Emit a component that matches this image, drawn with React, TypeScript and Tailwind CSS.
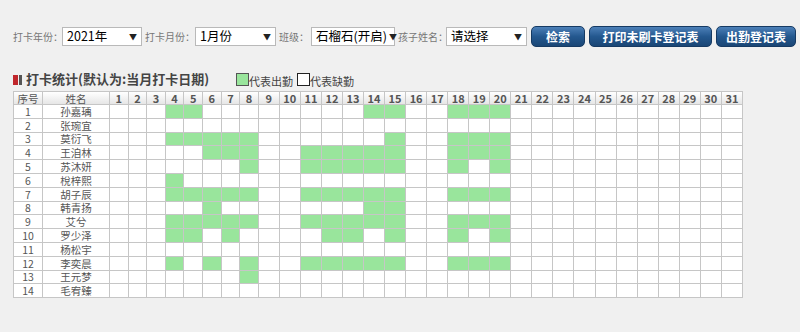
import React from "react";

const FONT = { fontFamily: '"Noto Sans CJK SC", "Liberation Sans", sans-serif' };

const names = [
  "孙嘉瑀", "张琬宜", "莫衍飞", "王洎林", "苏沐妍", "梲梓熙", "胡子辰",
  "韩青扬", "艾兮", "罗少泽", "杨松宇", "李奕晨", "王元梦", "毛宥臻",
];

const r = (a: number, b: number) => Array.from({ length: b - a + 1 }, (_, i) => a + i);

// days present per student
const present: number[][] = [
  [4, 5, 14, 15, 18, 19, 20],
  [],
  [...r(4, 8), 15, 18, 19, 20],
  [6, 7, 8, ...r(11, 15), 18, 19, 20],
  [8, ...r(11, 15), 18, 20],
  [4],
  [...r(4, 8), ...r(11, 15), 18, 19, 20],
  [6, 14, 15],
  [...r(4, 8), ...r(11, 15), 18, 19, 20],
  [4, 5, 7, 12, 13, 15, 18, 20],
  [],
  [4, 6, 8, ...r(11, 15), 18, 19, 20],
  [8],
  [],
];

const days = r(1, 31);

const Select = ({ value, width }: { value: string; width: string }) => (
  <div
    className={`${width} shrink-0 h-[19px] bg-white border border-[#b9b9b9] flex items-center justify-between pl-[4px] pr-[4px] text-[12.5px] text-black whitespace-nowrap`}
  >
    <span>{value}</span>
    <span className="text-[8px] text-[#222] ml-[2px]">▼</span>
  </div>
);

const Label = ({ text, width }: { text: string; width: string }) => (
  <span className={`${width} text-[10px] text-[#777] pl-[3px] whitespace-nowrap shrink-0`}>{text}</span>
);

const Btn = ({ text, width }: { text: string; width: string }) => (
  <button
    className={`${width} shrink-0 h-[21px] rounded-[5px] border border-[#163a63] bg-gradient-to-b from-[#4c80b8] via-[#24588f] to-[#1a4675] text-white text-[12px] font-bold flex items-center justify-center whitespace-nowrap`}
  >
    {text}
  </button>
);

export default function App() {
  return (
    <div className="w-[800px] h-[332px] bg-[#f0f0f0] overflow-hidden" style={FONT}>
      <div className="flex items-center pt-[26px] pl-[10px] h-[47px]">
        <Label text="打卡年份：" width="w-[52px]" />
        <Select value="2021年" width="w-[80px]" />
        <Label text="打卡月份：" width="w-[53px]" />
        <Select value="1月份" width="w-[81px]" />
        <Label text="班级：" width="w-[35px]" />
        <Select value="石榴石(开启)" width="w-[84px]" />
        <Label text="孩子姓名：" width="w-[51px]" />
        <Select value="请选择" width="w-[81px]" />
        <div className="flex gap-[4px] ml-[4px]">
          <Btn text="检索" width="w-[54px]" />
          <Btn text="打印未刷卡登记表" width="w-[123px]" />
          <Btn text="出勤登记表" width="w-[80px]" />
        </div>
      </div>

      <div className="flex items-end mt-[23px] pl-[13px] h-[18px]">
        <span className="flex items-center mr-[4px] mb-[3px]">
          <span className="w-[5px] h-[10px] bg-[#c0262c]" />
          <span className="w-[3px] h-[10px] bg-[#555] ml-[1px]" />
        </span>
        <span className="text-[13px] font-bold text-[#444] leading-[18px] whitespace-nowrap">打卡统计(默认为:当月打卡日期)</span>
        <span className="ml-[27px] w-[13px] h-[13px] bg-[#99e59c] border border-[#555] mb-[2px]" />
        <span className="text-[11px] text-[#444] leading-[14px] whitespace-nowrap">代表出勤</span>
        <span className="ml-[4px] w-[13px] h-[13px] bg-white border border-[#222] mb-[2px]" />
        <span className="text-[11px] text-[#444] leading-[14px] whitespace-nowrap">代表缺勤</span>
      </div>

      <table className="ml-[13px] mt-[3px] border-collapse table-fixed bg-white text-[#555] w-[730px]">
        <colgroup>
          <col className="w-[29px]" />
          <col className="w-[67px]" />
          {days.map((d) => (
            <col key={d} className={d <= 8 ? "w-[18.6px]" : "w-[21.05px]"} />
          ))}
        </colgroup>
        <thead>
          <tr className="h-[13px] bg-gradient-to-b from-white to-[#e4e4e4]">
            <th className="border border-[#c6c6c6] text-[10.5px] font-normal leading-[11px] p-0">序号</th>
            <th className="border border-[#c6c6c6] text-[10.5px] font-normal leading-[11px] p-0">姓名</th>
            {days.map((d) => (
              <th key={d} className="border border-[#c6c6c6] text-[11px] font-bold leading-[11px] p-0 text-[#555]">
                {d}
              </th>
            ))}
          </tr>
        </thead>
        <tbody>
          {names.map((n, i) => (
            <tr key={n} className="h-[13.8px]">
              <td className="border border-[#c6c6c6] text-[10.5px] leading-[11px] p-0 text-center">{i + 1}</td>
              <td className="border border-[#c6c6c6] text-[10.5px] leading-[11px] p-0 text-center">{n}</td>
              {days.map((d) => (
                <td
                  key={d}
                  className={`border border-[#c6c6c6] p-0 ${present[i].includes(d) ? "bg-[#99e59c]" : ""}`}
                />
              ))}
            </tr>
          ))}
        </tbody>
      </table>
    </div>
  );
}
